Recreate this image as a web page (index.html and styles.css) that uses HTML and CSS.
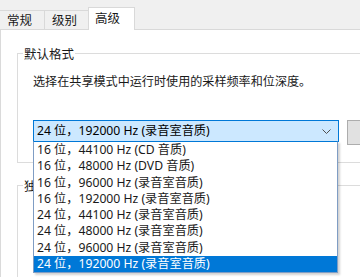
FILE: index.html
```html
<!DOCTYPE html>
<html lang="zh-CN">
<head>
<meta charset="utf-8">
<link rel="stylesheet" href="styles.css">
</head>
<body>
<div class="window">
  <div class="tabs">
    <div class="tab">常规</div>
    <div class="tab">级别</div>
    <div class="tab active">高级</div>
  </div>
  <div class="panel">
    <div class="group g1">
      <span class="legend">默认格式</span>
      <p class="desc">选择在共享模式中运行时使用的采样频率和位深度。</p>
      <div class="row">
        <div class="combo">
          <span class="combo-text">24 位，192000 Hz (录音室音质)</span>
          <svg class="chev" width="9" height="5" viewBox="0 0 9 5"><path d="M0.5 0.5 L4.5 4.5 L8.5 0.5" fill="none" stroke="#505050" stroke-width="1"/></svg>
          <ul class="list">
            <li>16 位，44100 Hz (CD 音质)</li>
            <li>16 位，48000 Hz (DVD 音质)</li>
            <li>16 位，96000 Hz (录音室音质)</li>
            <li>16 位，192000 Hz (录音室音质)</li>
            <li>24 位，44100 Hz (录音室音质)</li>
            <li>24 位，48000 Hz (录音室音质)</li>
            <li>24 位，96000 Hz (录音室音质)</li>
            <li class="sel">24 位，192000 Hz (录音室音质)</li>
          </ul>
        </div>
        <div class="btn"></div>
      </div>
    </div>
    <div class="group g2">
      <span class="legend">独占模式</span>
    </div>
  </div>
</div>
</body>
</html>
```

FILE: styles.css
```css
html, body {
  margin: 0;
  padding: 0;
}
body {
  width: 360px;
  height: 277px;
  overflow: hidden;
  background: #f0f0f0;
  font-family: "Noto Sans", "Noto Sans CJK SC", sans-serif;
  font-size: 12.2px;
  color: #000;
}
.window {
  width: 360px;
  height: 277px;
  display: flex;
  flex-direction: column;
  overflow: hidden;
}
.tabs {
  height: 29px;
  display: flex;
  align-items: flex-end;
  border-bottom: 1px solid #d9d9d9;
  flex: none;
}
.tab {
  box-sizing: border-box;
  width: 45px;
  height: 19px;
  margin-right: -1px;
  border: 1px solid #d9d9d9;
  border-bottom: none;
  background: #f0f0f0;
  padding-left: 7px;
  line-height: 17px;
  font-family: "Noto Sans CJK SC", sans-serif;
  font-size: 12.5px;
  color: #1a1a1a;
}
.tab:first-child {
  border-left: none;
  width: 45px;
}
.tab.active {
  position: relative;
  width: 47px;
  height: 23px;
  margin-bottom: -1px;
  background: #fff;
  padding-left: 6px;
  line-height: 19px;
  z-index: 1;
}
.panel {
  flex: 1;
  min-height: 0;
  background: #fff;
  border-left: 1px solid #dadada;
  padding-left: 16px;
  overflow: hidden;
}
.group {
  position: relative;
  border: 1px solid #dcdcdc;
  border-right: none;
}
.legend {
  position: absolute;
  top: -8px;
  left: 5px;
  padding: 0 1px;
  background: #fff;
  line-height: 16px;
  font-family: "Noto Sans CJK SC", sans-serif;
  font-size: 12.5px;
  color: #1a1a1a;
}
.g1 {
  margin-top: 23px;
  height: 110px;
  padding-left: 15px;
  box-sizing: border-box;
  z-index: 2;
}
.desc {
  margin: 19px 0 0 0;
  line-height: 16px;
  font-family: "Noto Sans CJK SC", sans-serif;
  font-size: 12.1px;
  color: #1a1a1a;
}
.row {
  display: flex;
  align-items: flex-start;
  margin-top: 31px;
}
.combo {
  position: relative;
  flex: none;
  box-sizing: border-box;
  width: 306px;
  height: 22px;
  border: 1px solid #0078d7;
  background: #cce8ff;
  display: flex;
  align-items: center;
  padding-left: 3px;
}
.combo-text {
  flex: 1;
  line-height: 16px;
  white-space: nowrap;
}
.chev {
  flex: none;
  margin-right: 7px;
  margin-top: 1px;
}
.btn {
  flex: none;
  box-sizing: border-box;
  width: 70px;
  height: 25px;
  margin-left: 8px;
  background: #e1e1e1;
  border: 1px solid #adadad;
}
.list {
  position: absolute;
  left: -1px;
  top: 20px;
  width: 305px;
  box-sizing: border-box;
  margin: 0;
  padding: 0;
  list-style: none;
  background: #fff;
  border: 1px solid #7f9dc4;
  border-top-color: #0078d7;
  box-shadow: 2px 2px 2px rgba(0, 0, 0, 0.18);
}
.list li {
  height: 16.3px;
  line-height: 16.3px;
  padding-left: 3px;
  white-space: nowrap;
  color: #1a1a1a;
}
.list li.sel {
  background: #0078d7;
  color: #fff;
}
.g2 {
  margin-top: 22px;
  height: 95px;
  border-bottom: none;
}
```
